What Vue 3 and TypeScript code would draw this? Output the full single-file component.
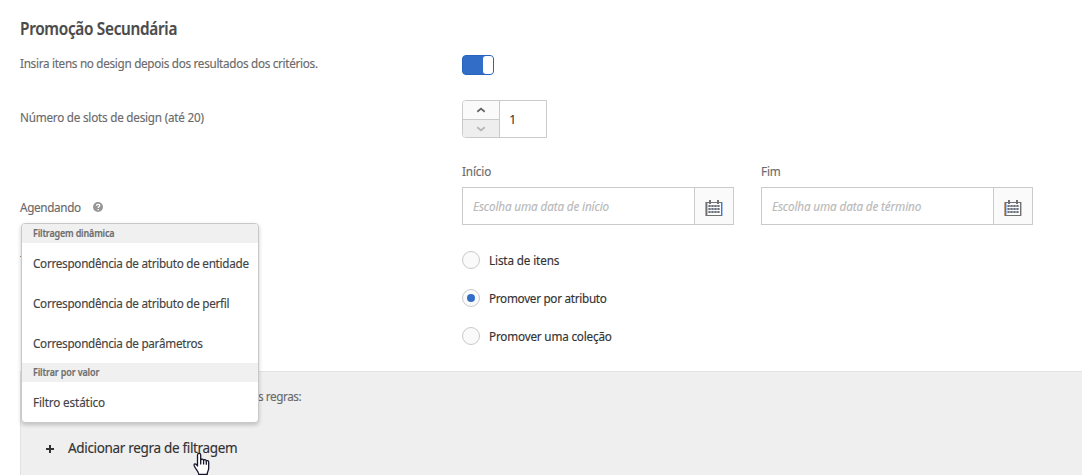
<script setup lang="ts">
import { ref } from 'vue'

interface MenuGroup { heading: string; key: string; items: { label: string; key: string }[] }

const dates = [
  { key: 'start', label: 'Início', placeholder: 'Escolha uma data de início' },
  { key: 'end', label: 'Fim', placeholder: 'Escolha uma data de término' },
]
const options = [
  { key: 'list', label: 'Lista de itens' },
  { key: 'attribute', label: 'Promover por atributo' },
  { key: 'collection', label: 'Promover uma coleção' },
]
const groups: MenuGroup[] = [
  {
    heading: 'Filtragem dinâmica',
    key: 'dynamic',
    items: [
      { key: 'entity', label: 'Correspondência de atributo de entidade' },
      { key: 'profile', label: 'Correspondência de atributo de perfil' },
      { key: 'params', label: 'Correspondência de parâmetros' },
    ],
  },
  { heading: 'Filtrar por valor', key: 'value', items: [{ key: 'static', label: 'Filtro estático' }] },
]
const selected = ref('attribute')
const enabled = ref(true)
const slots = ref(1)
</script>

<template>
  <main class="page">
    <h2 class="title"><span class="t t-title">Promoção Secundária</span></h2>

    <div class="row row-switch">
      <span class="t t-insert">Insira itens no design depois dos resultados dos critérios.</span>
      <button class="switch" :class="{ on: enabled }" @click="enabled = !enabled"><i></i></button>
    </div>

    <div class="row row-slots">
      <span class="t t-slots">Número de slots de design (até 20)</span>
      <div class="stepper">
        <div class="arrows">
          <button @click="slots++"><svg width="10" height="6" viewBox="0 0 10 6"><path d="M1.3 4.7 5 1.6l3.7 3.1" /></svg></button>
          <button class="off"><svg width="10" height="6" viewBox="0 0 10 6"><path d="M1.3 1.3 5 4.4l3.7-3.1" /></svg></button>
        </div>
        <div class="value">{{ slots }}</div>
      </div>
    </div>

    <div class="row row-dates">
      <div class="agenda">
        <span class="t t-agenda">Agendando</span>
        <svg class="help" width="10" height="10" viewBox="0 0 10 10">
          <circle cx="5" cy="5" r="5" />
          <path d="M3.4 3.8c0-2 3.3-2 3.3-.1 0 1.1-1.5 1.1-1.5 2.3M5.2 7.1v1.2" />
        </svg>
      </div>
      <div class="dates">
        <div v-for="d in dates" :key="d.key" class="date">
          <span class="t">{{ d.label }}</span>
          <div class="field">
            <div class="placeholder"><span class="t">{{ d.placeholder }}</span></div>
            <div class="calendar">
              <svg width="18" height="16" viewBox="0 0 18 16">
                <path class="warm" d="M.5 2v14" />
                <path class="cool" d="M17.500 2v14M2.500 3v12" />
                <path d="M1 2.500H17M1 15.500H17M1.500 2v14M16.500 2v14" />
                <path class="rings" d="M5 0v4M13 0v4" />
                <path class="dots-base" d="M3.500 6h11M3.500 9h11M3.500 12h11" />
                <path class="dots" d="M3.500 6h11M3.500 9h11M3.500 12h11" />
              </svg>
            </div>
          </div>
        </div>
      </div>
    </div>

    <div class="row row-radios">
      <span class="tick"></span>
      <div class="radios">
        <label v-for="o in options" :key="o.key" class="radio" @click="selected = o.key">
          <span class="ring" :class="{ checked: selected === o.key }"></span>
          <span class="t" :class="'o-' + o.key">{{ o.label }}</span>
        </label>
      </div>
    </div>

    <section class="rules">
      <div class="rules-text"><span class="t t-rules">s regras:</span></div>
      <div class="add">
        <svg width="8" height="8" viewBox="0 0 8 8"><path d="M4 0v8M0 4h8" /></svg>
        <span class="t t-add">Adicionar regra de filtragem</span>
      </div>
    </section>

    <div class="menu">
      <template v-for="g in groups" :key="g.key">
        <div class="heading"><span class="t" :class="'h-' + g.key">{{ g.heading }}</span></div>
        <div v-for="i in g.items" :key="i.key" class="item"><span class="t" :class="'m-' + i.key">{{ i.label }}</span></div>
      </template>
    </div>

    <svg class="pointer" width="18" height="24" viewBox="0 0 18 24">
      <path d="M4.500 14V3C4.500.9 7.700.9 7.700 3v5c.4-1.400 2.700-1.200 2.900.4.5-1.200 2.500-.9 2.700.7.6-1 2.400-.5 2.400 1.200v5.700c0 2.500-1.500 3.500-1.500 6.500H5.800c0-2.500-3-5-4.500-8.500-.8-2.500 1.400-3 3.200 0Z" />
      <path class="fold" d="M7.700 8v4.500M10.600 8.500v4M13.300 9.300v3.500" />
    </svg>
  </main>
</template>

<style>
body { background: #fff; overflow: hidden; }
</style>

<style scoped>
* { box-sizing: border-box; }
.page {
  position: relative; width: 1082px; height: 475px; overflow: hidden;
  font: 13px/20px "Noto Sans", sans-serif; color: #6a6a6a;
}
.t { display: inline-block; white-space: nowrap; letter-spacing: -.15px; transform: scaleX(.9); transform-origin: 0 50%; -webkit-text-stroke: .15px currentColor; }
.t-title, .o-attribute, .m-entity, .m-profile, .m-params { letter-spacing: -.31px; }
.t-insert { letter-spacing: -.33px; }
.t-slots { letter-spacing: -.25px; }
.t-agenda, .t-add { letter-spacing: -.36px; }
.t-rules { letter-spacing: -.45px; }
.o-collection, .h-dynamic { letter-spacing: -.2px; }
.title { margin: 0; padding: 17px 0 0 20px; height: 48px; font-size: 17px; line-height: 24px; font-weight: 600; color: #4b4b4b; }
.row { display: grid; grid-template-columns: 442px 1fr; margin-left: 20px; }
.row-switch { height: 52px; padding-top: 5px; }
.row-slots { height: 62px; }
.row-slots > .t { margin-top: 7px; }
button { display: block; padding: 0; font: inherit; }
.switch { width: 32px; height: 20px; margin-top: 2px; border: 1px solid #2764bd; border-radius: 4px; background: #fff; }
.switch i { display: block; width: 10px; height: 18px; background: #fff; border-radius: 3px; }
.switch.on { background: #326ec8; }
.switch.on i { margin-left: 20px; }
.stepper { display: flex; width: 85px; height: 38px; border: 1px solid #cacaca; border-radius: 4px 0 0 4px; overflow: hidden; }
.arrows { width: 37px; border-right: 1px solid #cacaca; }
.arrows button { display: flex; align-items: center; justify-content: center; width: 36px; height: 19px; border: 0; border-bottom: 1px solid #cacaca; background: #fafafa; }
.arrows .off { height: 17px; border: 0; background: #eee; }
.arrows path { fill: none; stroke: #656565; stroke-width: 1.8; }
.arrows .off path { stroke: #b5b5b5; }
.value { padding: 8px 0 0 9px; color: #323232; }
.row-dates { height: 88px; margin-top: -1px; }
.agenda { display: flex; align-items: center; height: 20px; margin-top: 36px; }
.agenda .t { width: 73px; }
.help circle { fill: #969696; }
.help path { fill: none; stroke: #fff; stroke-width: 1.3; }
.dates { display: flex; gap: 27px; }
.date { width: 272px; }
.date > .t { display: block; height: 26px; }
.field { display: flex; height: 38px; border: 1px solid #cacaca; }
.placeholder { flex: 1; padding: 8px 0 0 10px; font-style: italic; color: #b9b9b9; }
.calendar { display: flex; flex: none; align-items: center; justify-content: center; width: 39px; padding-top: 4px; border-left: 1px solid #cacaca; background: #fafafa; }
.calendar svg { flex: none; }
.calendar path { fill: none; stroke: #707070; stroke-width: 1; }
.calendar .warm { stroke: #c9a078; }
.calendar .cool { stroke: #a4c4f4; }
.calendar .rings { stroke-width: 2; }
.calendar .dots-base { stroke: #b4c6e4; stroke-width: 2; }
.calendar .dots { stroke-width: 2; stroke-dasharray: 2 1; }
.row-radios { height: 122px; }
.tick { width: 2px; height: 1px; margin-top: 7px; background: #a9896e; }
.radios { display: flex; flex-direction: column; gap: 20px; padding-top: 2px; }
.radio { display: flex; height: 18px; align-items: center; gap: 8.5px; color: #323232; }
.ring { display: flex; align-items: center; justify-content: center; width: 18px; height: 18px; border: 1px solid #cacaca; border-radius: 50%; background: #fafafa; }
.ring.checked::after { content: ""; width: 8px; height: 8px; border-radius: 50%; background: #326ec8; }
.rules { height: 104px; margin-left: 20px; border: 1px solid #e2e2e2; border-width: 1px 0 0 1px; background: #efefef; }
.rules-text { height: 66px; padding: 14px 0 0 237px; }
.add { display: flex; align-items: center; height: 20px; padding-left: 25px; gap: 13.5px; font-size: 15px; color: #323232; }
.add .t { margin-top: -2px; }
.add svg { margin-top: 2px; }
.add path { stroke: #323232; stroke-width: 2; }
.menu { position: absolute; left: 21px; top: 223px; width: 238px; height: 200px; border: 1px solid #c8c8c8; border-radius: 4px; background: #fff; color: #424242; box-shadow: 0 2px 4px rgba(0, 0, 0, .2); overflow: hidden; }
.heading { height: 19px; padding-left: 11px; background: #f0f0f0; color: #6e6e6e; font-size: 10px; line-height: 19px; font-weight: 600; }
.item { height: 40px; padding-left: 10.5px; line-height: 40px; }
.pointer { position: absolute; left: 193px; top: 452px; }
.pointer path { fill: #fff; stroke: #15152b; stroke-width: 1.3; stroke-linejoin: round; }
.pointer .fold { fill: none; }
</style>
